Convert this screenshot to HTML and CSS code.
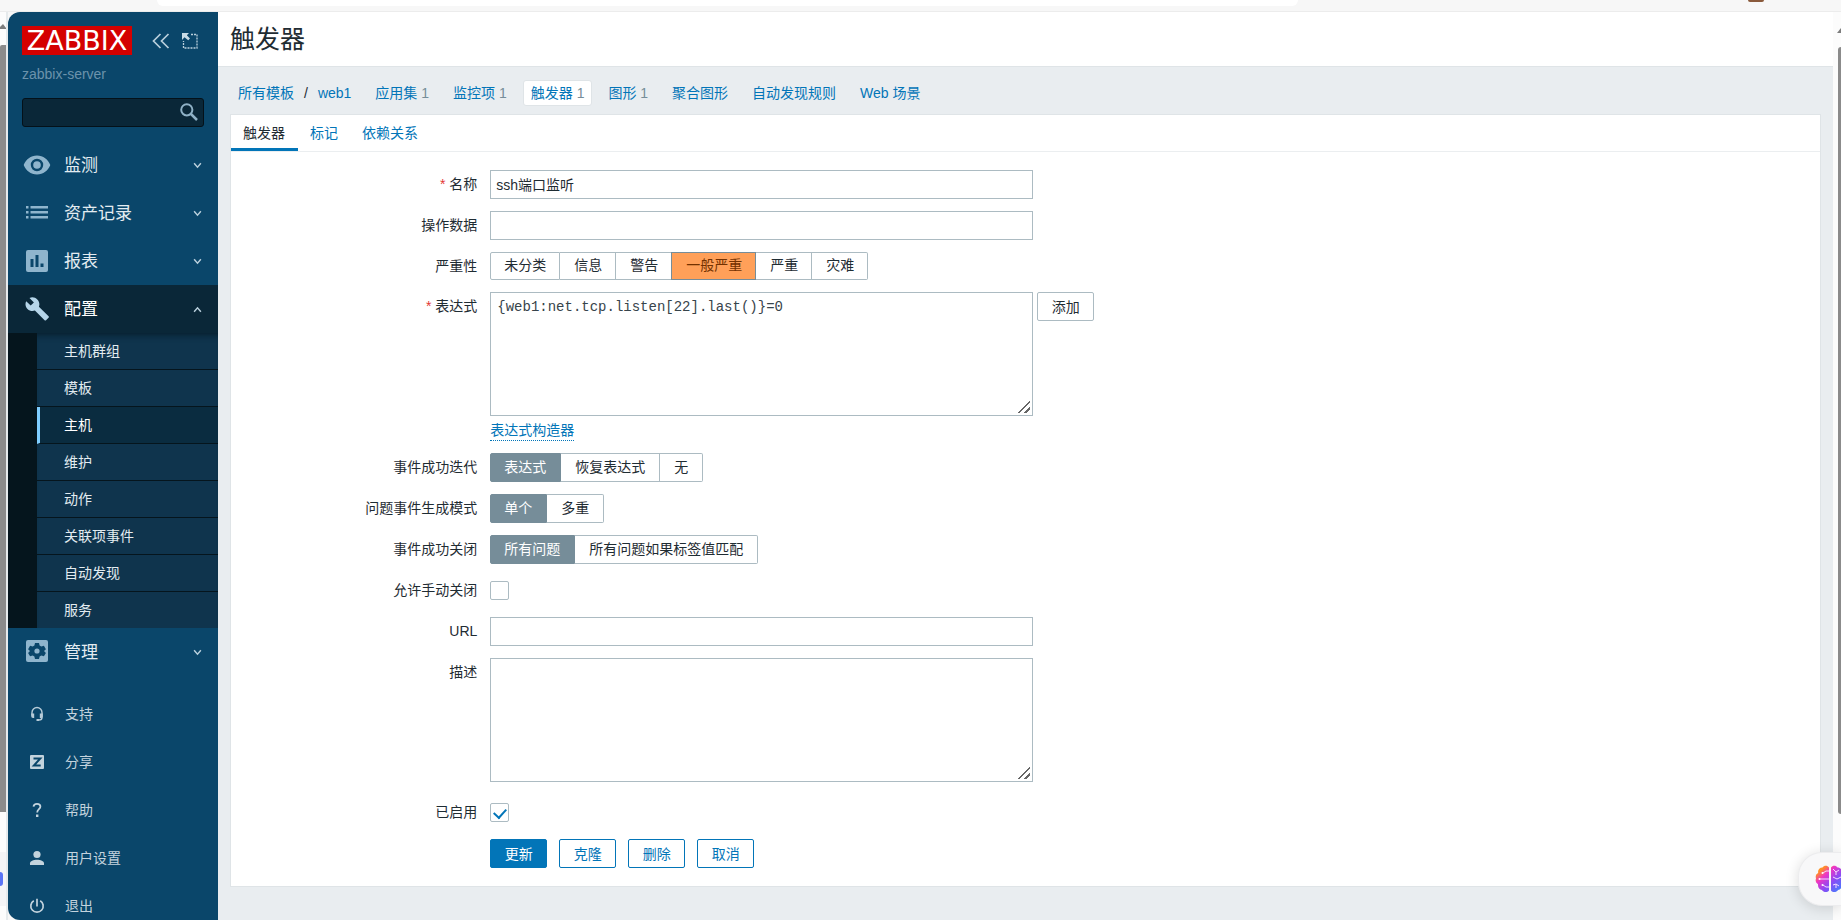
FILE: index.html
```html
<!DOCTYPE html>
<html lang="zh-CN">
<head>
<meta charset="utf-8">
<title>触发器</title>
<link rel="stylesheet" href="styles.css">
</head>
<body>
<div class="browser-top">
  <div class="address-bar"></div>
  <div class="avatar"></div>
</div>
<div class="shell">
  <div class="edge edge-left">
    <svg class="edge-arrow" width="6" height="5" viewBox="0 0 6 5"><path d="M0 3 3 0 6 4V5H0z" fill="#7d7d7d"/></svg>
    <div class="thumb"></div>
    <div class="edge-tail"><span class="edge-dot"></span></div>
  </div>
  <aside class="sidebar">
    <div class="brand">
      <a class="logo" href="#">ZABBIX</a>
      <button class="icon-btn" type="button" aria-label="收起侧边栏">
        <svg width="18" height="16" viewBox="0 0 18 16" fill="none" stroke="#b9cfdc" stroke-width="1.7"><path d="M8.500 1 1.500 8l7 7M16.500 1 9.500 8l7 7"/></svg>
      </button>
      <button class="icon-btn" type="button" aria-label="隐藏侧边栏">
        <svg width="16" height="16" viewBox="0 0 16 16" fill="none" stroke="#b9cfdc"><path d="M9 1.500h6V15H1.500V8" stroke-width="1.300" stroke-dasharray="2 1"/><path d="M0 0h7L4.800 2.200 8 5.500 6.200 7.300 2.500 4.300 0 7z" fill="#c8dbe6" stroke="none"/></svg>
      </button>
    </div>
    <div class="server">zabbix-server</div>
    <form class="search">
      <input class="search-input" type="text" aria-label="搜索">
      <button class="search-btn" type="button" aria-label="搜索">
        <svg width="18" height="18" viewBox="0 0 18 18" fill="none" stroke="#8fb1c6"><circle cx="6.800" cy="6.800" r="5.600" stroke-width="2"/><path d="m11 11 6 6" stroke-width="2.500"/></svg>
      </button>
    </form>
    <nav class="menu">
      <a class="menu-item" href="#">
        <svg class="menu-icon" viewBox="0 0 28 24"><path fill-rule="evenodd" fill="#8fb5cd" d="M14 2.500C7.800 2.500 2.800 6.500.700 12c2.100 5.500 7.100 9.500 13.300 9.500S25.200 17.500 27.300 12C25.200 6.500 20.200 2.500 14 2.500zm0 15.700a6.200 6.200 0 1 1 0-12.400 6.200 6.200 0 0 1 0 12.400zm0-10a3.800 3.800 0 1 0 0 7.600 3.800 3.800 0 0 0 0-7.600z"/></svg>
        <span class="menu-text">监测</span>
        <svg class="chevron" viewBox="0 0 8 6"><path d="m1 1 3 3.500L7 1"/></svg>
      </a>
      <a class="menu-item" href="#">
        <svg class="menu-icon" viewBox="0 0 28 24"><path fill="#8fb5cd" d="M3 5h2.500v2.500H3zM7.500 5H25v2.500H7.500zM3 10h2.500v2.500H3zM7.500 10H25v2.500H7.500zM3 15h2.500v2.500H3zM7.500 15H25v2.500H7.500z"/></svg>
        <span class="menu-text">资产记录</span>
        <svg class="chevron" viewBox="0 0 8 6"><path d="m1 1 3 3.500L7 1"/></svg>
      </a>
      <a class="menu-item" href="#">
        <svg class="menu-icon" viewBox="0 0 28 24"><rect x="3" y="1" width="22" height="22" rx="2" fill="#8fb5cd"/><path fill="#0a466a" d="M7.500 10h3v8h-3zM12.500 6h3v12h-3zM17.500 14.500h3V18h-3z"/></svg>
        <span class="menu-text">报表</span>
        <svg class="chevron" viewBox="0 0 8 6"><path d="m1 1 3 3.500L7 1"/></svg>
      </a>
      <a class="menu-item menu-item-open" href="#">
        <svg class="menu-icon" viewBox="0 0 28 24"><path fill="#b5d5e9" d="M24.600 19.800 14.900 10.200c1-2.500.400-5.400-1.600-7.300C11.200.700 8 .300 5.500 1.500l4.400 4.400-3.200 3.200-4.500-4.400C.9 7.200 1.400 10.300 3.500 12.500c2 2 4.900 2.500 7.400 1.600l9.700 9.600c.400.400 1 .400 1.400 0l2.500-2.400c.500-.400.500-1.100.100-1.500z" transform="translate(1 -.5)"/></svg>
        <span class="menu-text">配置</span>
        <svg class="chevron" viewBox="0 0 8 6"><path d="m1 5 3-3.500L7 5"/></svg>
      </a>
      <div class="submenu">
        <a class="submenu-item" href="#">主机群组</a>
        <a class="submenu-item" href="#">模板</a>
        <a class="submenu-item submenu-item-active" href="#">主机</a>
        <a class="submenu-item" href="#">维护</a>
        <a class="submenu-item" href="#">动作</a>
        <a class="submenu-item" href="#">关联项事件</a>
        <a class="submenu-item" href="#">自动发现</a>
        <a class="submenu-item" href="#">服务</a>
      </div>
      <a class="menu-item" href="#">
        <svg class="menu-icon" viewBox="0 0 28 24"><rect x="3" y="0" width="22" height="22" rx="2" fill="#8fb5cd"/><path fill="#0a466a" d="M12 3h4l.6 2.500 1.700 1 2.600-.7 2 3.400-1.900 1.800 1.900 1.900-2 3.400-2.600-.7-1.700 1L16 19h-4l-.6-2.400-1.700-1-2.600.7-2-3.400L7 11 5.100 9.200l2-3.400 2.600.7 1.700-1z"/><circle cx="14" cy="11" r="2.600" fill="#8fb5cd"/></svg>
        <span class="menu-text">管理</span>
        <svg class="chevron" viewBox="0 0 8 6"><path d="m1 1 3 3.500L7 1"/></svg>
      </a>
    </nav>
    <nav class="user-menu">
      <a class="user-item" href="#">
        <svg class="user-icon" viewBox="0 0 16 16"><path d="M3 9.500V6.500a5 5 0 0 1 10 0v5c0 1.700-1 2.500-3 2.500H8.500" fill="none" stroke="#b6cbd8" stroke-width="1.400"/><path fill="#b6cbd8" d="M2.200 7.500h3V12H4a1.800 1.800 0 0 1-1.800-1.800zM10.800 7.500h3v3A1.800 1.800 0 0 1 12 12h-1.200zM7.500 13h2.500v2H7.500z"/></svg>
        <span>支持</span>
      </a>
      <a class="user-item" href="#">
        <svg class="user-icon" viewBox="0 0 16 16"><rect x="1" y="1" width="14" height="14" rx="1" fill="#c3d3dd"/><path d="M4.500 4.500h6.800l-6.400 7h6.800" fill="none" stroke="#0a466a" stroke-width="2"/></svg>
        <span>分享</span>
      </a>
      <a class="user-item" href="#">
        <svg class="user-icon" viewBox="0 0 16 16"><path d="M4.500 4.700C4.700 2.800 6 1.800 8 1.800s3.400 1 3.400 2.800c0 2.600-3.200 2.700-3.200 5.900" fill="none" stroke="#c3d3dd" stroke-width="1.800"/><rect x="7" y="12.500" width="2.400" height="2.500" fill="#c3d3dd"/></svg>
        <span>帮助</span>
      </a>
      <a class="user-item" href="#">
        <svg class="user-icon" viewBox="0 0 16 16" fill="#c3d3dd"><circle cx="8" cy="4.500" r="3.600"/><path d="M1 15v-1.500C1 11 4.500 9.800 8 9.800s7 1.200 7 3.700V15z"/></svg>
        <span>用户设置</span>
      </a>
      <a class="user-item" href="#">
        <svg class="user-icon" viewBox="0 0 16 16" fill="none" stroke="#c3d3dd" stroke-width="1.700"><path d="M8 .8v7.700M4.800 2.700a6.200 6.200 0 1 0 6.400 0"/></svg>
        <span>退出</span>
      </a>
    </nav>
  </aside>
  <main class="main">
    <header class="page-header"><h1 class="page-title">触发器</h1></header>
    <ul class="crumbs">
      <li class="crumb crumb-path"><a href="#">所有模板</a><span>/</span><a href="#">web1</a></li>
      <li class="crumb"><a href="#">应用集</a> <span class="count">1</span></li>
      <li class="crumb"><a href="#">监控项</a> <span class="count">1</span></li>
      <li class="crumb crumb-active"><a href="#">触发器</a> <span class="count">1</span></li>
      <li class="crumb"><a href="#">图形</a> <span class="count">1</span></li>
      <li class="crumb"><a href="#">聚合图形</a></li>
      <li class="crumb"><a href="#">自动发现规则</a></li>
      <li class="crumb"><a href="#">Web 场景</a></li>
    </ul>
    <section class="card">
      <div class="tabs">
        <a class="tab tab-active" href="#">触发器</a>
        <a class="tab" href="#">标记</a>
        <a class="tab" href="#">依赖关系</a>
      </div>
      <form class="form">
        <label class="label required" for="name">名称</label>
        <div class="field"><input class="text" id="name" type="text" value="ssh端口监听"></div>

        <label class="label" for="opdata">操作数据</label>
        <div class="field"><input class="text" id="opdata" type="text"></div>

        <span class="label" id="severity">严重性</span>
        <div class="segments segments-severity" role="radiogroup" aria-labelledby="severity">
          <input type="radio" name="sev" id="sev0"><label for="sev0">未分类</label>
          <input type="radio" name="sev" id="sev1"><label for="sev1">信息</label>
          <input type="radio" name="sev" id="sev2"><label for="sev2">警告</label>
          <input type="radio" name="sev" id="sev3" checked><label for="sev3">一般严重</label>
          <input type="radio" name="sev" id="sev4"><label for="sev4">严重</label>
          <input type="radio" name="sev" id="sev5"><label for="sev5">灾难</label>
        </div>

        <label class="label required" for="expr">表达式</label>
        <div class="field field-expr">
          <div class="expr-row">
            <textarea class="area area-mono" id="expr" spellcheck="false">{web1:net.tcp.listen[22].last()}=0</textarea>
            <button class="btn btn-grey" type="button">添加</button>
          </div>
          <a class="dotted" href="#">表达式构造器</a>
        </div>

        <span class="label" id="okgen">事件成功迭代</span>
        <div class="segments" role="radiogroup" aria-labelledby="okgen">
          <input type="radio" name="ok" id="ok0" checked><label for="ok0">表达式</label>
          <input type="radio" name="ok" id="ok1"><label for="ok1">恢复表达式</label>
          <input type="radio" name="ok" id="ok2"><label for="ok2">无</label>
        </div>

        <span class="label" id="mode">问题事件生成模式</span>
        <div class="segments" role="radiogroup" aria-labelledby="mode">
          <input type="radio" name="mode" id="mode0" checked><label for="mode0">单个</label>
          <input type="radio" name="mode" id="mode1"><label for="mode1">多重</label>
        </div>

        <span class="label" id="close">事件成功关闭</span>
        <div class="segments" role="radiogroup" aria-labelledby="close">
          <input type="radio" name="close" id="close0" checked><label for="close0">所有问题</label>
          <input type="radio" name="close" id="close1"><label for="close1">所有问题如果标签值匹配</label>
        </div>

        <label class="label" for="manual">允许手动关闭</label>
        <div class="field field-check"><input class="check" id="manual" type="checkbox"></div>

        <label class="label" for="url">URL</label>
        <div class="field"><input class="text" id="url" type="text"></div>

        <label class="label" for="desc">描述</label>
        <div class="field field-desc"><textarea class="area" id="desc"></textarea></div>

        <label class="label" for="enabled">已启用</label>
        <div class="field field-check"><input class="check" id="enabled" type="checkbox" checked></div>

        <div class="actions">
          <button class="btn btn-primary" type="button">更新</button>
          <button class="btn" type="button">克隆</button>
          <button class="btn" type="button">删除</button>
          <button class="btn" type="button">取消</button>
        </div>
      </form>
    </section>
  </main>
  <div class="edge edge-right">
    <svg class="edge-arrow" width="4" height="5" viewBox="0 0 4 5"><path d="M0 5 4 0v5z" fill="#7d7d7d"/></svg>
    <div class="thumb"></div>
  </div>
</div>
<button class="assistant" type="button" aria-label="助手">
  <svg width="30" height="28" viewBox="0 0 30 28">
    <defs><linearGradient id="brain" x1="0" y1="0" x2="1" y2="1"><stop offset="0" stop-color="#ffb01f"/><stop offset=".18" stop-color="#ff8a2a"/><stop offset=".34" stop-color="#ef35c5"/><stop offset=".6" stop-color="#8a4bf5"/><stop offset="1" stop-color="#2f8dff"/></linearGradient></defs>
    <path fill="url(#brain)" d="M14 2.500C12.500.300 9 .300 7.500 2.500 4.500 2.500 2.500 5 3.200 8 .8 9 .300 11.500 1 13.500c-.8 2-.3 4.500 2 5.700-.3 3.300 1.500 5.300 4 5.800 1.500 2.600 5.500 2.600 7 .500zM16 2.500c1.500-2.200 5-2.200 6.500 0 3 0 5 2.500 4.300 5.500 2.400 1 2.900 3.500 2.200 5.500.8 2 .3 4.500-2 5.700.3 3.300-1.500 5.300-4 5.800-1.500 2.600-5.500 2.600-7 .5z"/>
    <path fill="none" stroke="#f3d9ff" stroke-width="1" d="M14 6h-3L8 8M14 14H5M14 22h-3l-3-2M18 4l3 3 3-2M21 7v3M18 12l4 2 4-2M18 20l3-1 3 2M21 19v4"/>
    <circle cx="7.500" cy="8" r="1" fill="#fff"/><circle cx="4.500" cy="14" r="1" fill="#fff"/><circle cx="7.500" cy="20" r="1" fill="#fff"/>
  </svg>
</button>
</body>
</html>
```
FILE: styles.css
```css
* { box-sizing: border-box; }

body {
  margin: 0;
  height: 100vh;
  display: flex;
  flex-direction: column;
  overflow: hidden;
  background: #f7f7f7;
  color: #1f2c33;
  font: 14px/20px "Liberation Sans", "Noto Sans CJK SC", sans-serif;
}

a { color: #0275b8; text-decoration: none; }
button, input, textarea { font: inherit; color: inherit; }
button { cursor: pointer; }

.browser-top {
  flex: none;
  height: 12px;
  display: flex;
  align-items: flex-start;
  padding: 0 77px 0 157px;
  border-bottom: 1px solid #ececec;
}
.address-bar {
  flex: none;
  width: 71%;
  height: 6px;
  background: #fff;
  border-radius: 0 0 14px 14px;
}
.avatar {
  width: 16px;
  height: 2px;
  margin-left: auto;
  background: #8a5a3c;
  border-radius: 0 0 8px 8px;
}

.shell { flex: 1; min-height: 0; display: flex; }

.edge { flex: none; width: 8px; background: #fcfcfc; display: flex; flex-direction: column; }
.edge-arrow { flex: none; margin-top: 12px; }
.edge-left { border-right: 2px solid #e6eaec; }
.thumb { background: #8b8b8b; flex: none; height: 84.5%; }
.edge-left .thumb { margin-top: 16px; border-radius: 2px 0 0 0; }
.edge-tail { flex: none; margin-top: 40px; height: 54px; background: #f4f4f6; display: flex; align-items: center; }
.edge-dot { width: 3px; height: 14px; background: #5b74f5; border-radius: 0 4px 4px 0; }
.edge-right { align-items: flex-end; }
.edge-right .edge-arrow { margin-top: 16px; }
.edge-right .thumb { width: 3px; margin-top: 14px; border-radius: 4px 0 0 4px; }

.sidebar {
  flex: none;
  width: 210px;
  overflow: hidden;
  background: #0a466a;
  border-radius: 12px 0 0 12px;
}
.brand { display: flex; align-items: center; padding: 14px 20px 0 14px; }
.logo {
  width: 110px;
  height: 29px;
  margin-right: 20px;
  background: #d40000;
  color: #fff;
  font: 27px/29px "DejaVu Sans", sans-serif;
  text-align: center;
}
.icon-btn {
  display: flex;
  margin-right: 12px;
  padding: 0;
  border: 0;
  background: none;
}
.icon-btn:last-child { margin-right: 0; }
.server { margin-top: 9px; padding-left: 14px; color: #6c93ac; }
.search {
  display: flex;
  align-items: center;
  height: 29px;
  margin: 14px 14px 0;
  padding: 0 5px 2px 0;
  background: #0a2738;
  border: 1px solid #041119;
  border-radius: 3px;
}
.search-input { flex: 1; min-width: 0; padding: 0 6px; border: 0; background: none; color: #fff; outline: 0; }
.search-btn { display: flex; padding: 0; border: 0; background: none; }

.menu { margin-top: 14px; }
.menu-item {
  display: flex;
  align-items: center;
  height: 48px;
  padding: 0 16px 0 15px;
  color: #e3ecf1;
  font-size: 17px;
}
.menu-item-open { background: #0a2738; color: #fff; }
.menu-icon { width: 28px; height: 24px; margin-right: 13px; }
.menu-text { flex: 1; padding-top: 2px; }
.chevron { width: 9px; height: 7px; fill: none; stroke: #b9cfdc; stroke-width: 1.3; }
.submenu { border-left: 29px solid #05151d; box-shadow: inset 0 8px 8px -8px #04131b; background: #0f344d; }
.submenu-item {
  display: block;
  height: 37px;
  padding-left: 27px;
  border-bottom: 1px solid #05151d;
  line-height: 36px;
  color: #e3ecf1;
}
.submenu-item:last-child { height: 36px; border-bottom: 0; }
.submenu-item-active { padding-left: 24px; border-left: 3px solid #7fceff; background: #0a2c40; color: #fff; }

.user-menu { margin-top: 14px; }
.user-item {
  display: flex;
  align-items: center;
  gap: 20px;
  height: 48px;
  padding-left: 21px;
  color: #c3d3dd;
}
.user-icon { width: 16px; height: 16px; }

.main { flex: 1; min-width: 0; background: #e9edf0; }
.page-header {
  display: flex;
  align-items: center;
  height: 55px;
  padding: 0 12px;
  background: #fff;
  border-bottom: 1px solid #dfe4e7;
}
.page-title { margin: 0; font-size: 25px; line-height: 32px; font-weight: 400; }

.crumbs { display: flex; gap: 8px; margin: 13px 12px 8px; padding: 0; list-style: none; }
.crumb { padding: 2px 7px; border: 1px solid transparent; border-radius: 3px; white-space: nowrap; }
.crumb-path { display: flex; gap: 10px; }
.crumb-active { background: #fff; border-color: #dfe4e7; }
.count { color: #768d99; }

.card { margin: 0 12px; background: #fff; border: 1px solid #dfe4e7; }
.tabs { display: flex; border-bottom: 1px solid #ebeef0; }
.tab { padding: 8px 12px 5px; border-bottom: 3px solid transparent; }
.tab-active { padding-right: 13px; color: #1f2c33; border-color: #0275b8; }

.form {
  display: grid;
  grid-template-columns: 15.5% minmax(0, 1fr);
  column-gap: 13px;
  row-gap: 12px;
  padding: 18px 0;
}
.label { padding-top: 4px; text-align: right; }
.required::before { content: "* "; color: #e33734; }
.field { display: flex; }
.field-check { height: 29px; align-items: center; }
.text {
  width: 543px;
  max-width: 100%;
  height: 29px;
  padding: 0 5px 1px;
  border: 1px solid #acbbc2;
  background: #fff;
}
.area {
  display: block;
  width: 543px;
  height: 124px;
  padding: 4px 6px;
  border: 1px solid #acbbc2;
  background: #fff;
}
.area::-webkit-resizer {
  background: linear-gradient(135deg, transparent 46%, #666 46%, #666 57%, transparent 57%, transparent 74%, #666 74%, #666 85%, transparent 85%) 1px 1px / 12px 12px no-repeat;
}
.area-mono { font-family: "Liberation Mono", monospace; color: #37444b; }
.field-expr { flex-direction: column; align-items: flex-start; gap: 4px; }
.field-desc { padding-bottom: 4px; }
.expr-row { display: flex; align-items: flex-start; gap: 4px; }
.dotted { border-bottom: 1px dotted #0275b8; }

.segments { display: flex; position: relative; height: 29px; }
.segments-severity { height: 28px; }
.segments input { position: absolute; margin: 0; opacity: 0; pointer-events: none; }
.segments label {
  padding: 3px 14px 0;
  border: solid #acbbc2;
  border-width: 1px 1px 1px 0;
  cursor: pointer;
}
.segments label:first-of-type { padding-left: 13px; border-left-width: 1px; border-radius: 2px 0 0 2px; }
.segments label:last-of-type { border-radius: 0 2px 2px 0; }
.segments input:checked + label { background: #768d99; border-color: #768d99; color: #fff; }
.segments-severity label { padding: 2px 13px 0 14px; }
.segments-severity input:checked + label { background: #ffa059; border-color: #768d99; color: #733100; box-shadow: -1px 0 #768d99; }

.check {
  display: flex;
  justify-content: center;
  align-items: center;
  appearance: none;
  width: 19px;
  height: 19px;
  margin: 0;
  border: 1px solid #acbbc2;
  border-radius: 2px;
  background: #fff;
}
.check:checked::after {
  content: "";
  width: 6px;
  height: 10px;
  margin-bottom: 2px;
  border: solid #0275b8;
  border-width: 0 2px 2px 0;
  transform: rotate(42deg);
}

.btn {
  min-width: 57px;
  height: 29px;
  padding: 0 12px;
  border: 1px solid #0275b8;
  border-radius: 2px;
  background: #fff;
  color: #0275b8;
}
.btn-primary { background: #0275b8; color: #fff; }
.btn-grey { border-color: #acbbc2; color: #1f2c33; }
.actions { grid-column: 2; display: flex; gap: 12px; }

.assistant {
  position: absolute;
  right: 0;
  bottom: 14px;
  display: flex;
  align-items: center;
  width: 43px;
  height: 54px;
  padding: 0 0 0 16px;
  overflow: hidden;
  border: 1px solid #ececee;
  border-right: 0;
  border-radius: 24px 0 0 24px;
  background: #f8f8f9;
  box-shadow: 0 2px 14px rgba(0, 0, 0, .14);
}
.assistant svg { flex: none; }
```
